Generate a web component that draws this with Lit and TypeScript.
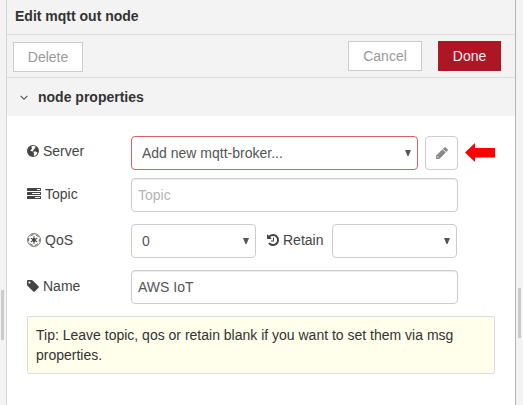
import { LitElement, html, css, svg, nothing } from "lit";
import { customElement, property } from "lit/decorators.js";

const GLYPHS: Record<string, { box: string; width: number; body: unknown }> = {
  globe: {
    box: "0 0 12 14",
    width: 12,
    body: svg`<path fill-rule="evenodd" d="M6 1a6 6 0 1 0 0 12A6 6 0 0 0 6 1ZM4.6 2.2 6.2 1.8 8.6 2.4 8 3.2 8.7 3.9 7.6 4.6 7 5.6 6 6.3 6.3 7 5.5 7.4 4.6 6.9 3.9 7.2 3.4 6.2 4.4 5.3 5.2 4.5 4.4 3.6ZM7 7.6 8.4 7.3 9.3 8.1 10.6 8.4 9.9 10.1 8.5 11.4 6.9 12 6.7 11 7.3 10.1 6.5 9.1Z"/>`,
  },
  tasks: {
    box: "0 0 1792 1792",
    width: 14,
    body: svg`<path d="M1024 1408h640v-128h-640v128zm-384-512h1024v-128h-1024v128zm640-512h384v-128h-384v128zm512 832v256q0 26-19 45t-45 19h-1664q-26 0-45-19t-19-45v-256q0-26 19-45t45-19h1664q26 0 45 19t19 45zm0-512v256q0 26-19 45t-45 19h-1664q-26 0-45-19t-19-45v-256q0-26 19-45t45-19h1664q26 0 45 19t19 45zm0-512v256q0 26-19 45t-45 19h-1664q-26 0-45-19t-19-45v-256q0-26 19-45t45-19h1664q26 0 45 19t19 45z"/>`,
  },
  empire: {
    box: "0 0 14 14",
    width: 14,
    body: svg`
      <circle cx="7" cy="7" r="6.5" fill="none" stroke="currentColor" stroke-width=".7"/>
      <circle cx="7" cy="7" r="5.4" fill="none" stroke="currentColor" stroke-width=".9" stroke-dasharray="3.4 2.255" stroke-dashoffset="1.7"/>
      <circle cx="7" cy="7" r="1.9"/>
      <path d="M6.4 3.3h1.2L7.3 7l-.6 0ZM6.4 10.7h1.2L7.3 7h-.6ZM3.5 5.7l.6-1L7.2 6.8 6.9 7.3ZM9.9 9.3l.6-1L7.2 6.7 6.9 7.3ZM3.5 8.3l.6 1L7.2 7.3 6.9 6.7ZM9.9 4.7l.6 1L7.2 7.3 6.9 6.8Z"/>`,
  },
  tag: {
    box: "128 0 1536 1792",
    width: 12,
    body: svg`<path d="M576 448q0-53-37.5-90.5t-90.5-37.5-90.5 37.5-37.5 90.5 37.5 90.5 90.5 37.5 90.5-37.5 37.5-90.5zm1067 576q0 53-37 90l-491 492q-39 37-91 37-53 0-90-37l-715-716q-38-37-64.5-101t-26.5-117v-416q0-52 38-90t90-38h416q53 0 117 26.5t102 64.5l715 714q37 39 37 91z"/>`,
  },
  history: {
    box: "128 0 1536 1792",
    width: 12,
    body: svg`<path d="M1664 896q0 156-61 298t-164 245-245 164-298 61q-172 0-327-72.5t-264-204.5q-7-10-6.5-22.5t8.5-20.5l137-138q10-9 25-9 16 2 23 12 73 95 179 147t225 52q104 0 198.5-40.5t163.5-109.5 109.5-163.5 40.5-198.5-40.5-198.5-109.5-163.5-163.5-109.5-198.5-40.5q-98 0-188 35.5t-160 101.5l137 138q31 30 14 69-17 40-59 40h-448q-26 0-45-19t-19-45v-448q0-42 40-59 39-17 69 14l130 129q107-101 244.5-156.5t284.5-55.5q156 0 298 61t245 164 164 245 61 298zm-640-288v448q0 14-9 23t-23 9h-320q-14 0-23-9t-9-23v-64q0-14 9-23t23-9h224v-352q0-14 9-23t23-9h64q14 0 23 9t9 23z"/>`,
  },
  pencil: {
    box: "128 0 1536 1792",
    width: 12,
    body: svg`<path d="M400 1500l80-80-120-120-80 80v60h60v60zM960 416l416 416-832 832h-416v-416zm683 96q0 53-37 90l-166 166-416-416 166-165q36-38 90-38 53 0 91 38l235 234q37 39 37 91z" fill-rule="evenodd"/>`,
  },
};

@customElement("form-icon")
export class FormIcon extends LitElement {
  @property() name = "";

  static styles = css`
    :host { display: block; flex: none; height: 14px; }
    svg { display: block; fill: currentColor; }
  `;

  render() {
    const g = GLYPHS[this.name];
    return g ? html`<svg width=${g.width} height="14" viewBox=${g.box}>${g.body}</svg>` : nothing;
  }
}

@customElement("select-box")
export class SelectBox extends LitElement {
  @property() value = "";

  static styles = css`
    :host {
      box-sizing: border-box;
      display: flex;
      align-items: center;
      justify-content: space-between;
      height: 34px;
      padding: 0 6px 0 10px;
      border: 1px solid #ccc;
      border-radius: 4px;
      background: #fff;
      color: #555;
    }
    :host([invalid]) { border-color: #d6615f; }
    svg { display: block; fill: #555; }
  `;

  render() {
    return html`<span>${this.value}</span>
      <svg width="6" height="6" viewBox="0 0 6 6"><path d="M0 0h6L3.5 6h-1z" /></svg>`;
  }
}

@customElement("app-root")
export class AppRoot extends LitElement {
  static styles = css`
    :host {
      display: grid;
      grid-template-columns: 6px 1fr 7px;
      height: 405px;
      overflow: hidden;
      background: #f3f3f3;
      color: #333;
      font: 14px/20px "Liberation Sans", Arial, sans-serif;
    }
    .gutter { display: flex; justify-content: flex-end; align-items: flex-start; }
    .left { padding: 290px 2px 0 0; }
    .right { padding: 288px 2px 0 0; }
    .grip { width: 3px; height: 50px; background: #ccc; }
    .tray {
      display: flex;
      flex-direction: column;
      min-width: 0;
      background: #fff;
      border-left: 1px solid #d6d6d6;
      border-right: 1px solid #b4b4b4;
    }
    .title, .toolbar, .section {
      box-sizing: border-box;
      display: flex;
      background: #f3f3f3;
      flex: none;
    }
    .title, .section { font-weight: bold; }
    .title { height: 35px; padding: 6px 8px; border-bottom: 1px solid #ddd; }
    .toolbar { height: 43px; padding: 6px 14px 0 6px; border-bottom: 1px solid #ddd; }
    .section { height: 38px; padding: 9px 12.500px; gap: 10.500px; }
    .section svg { margin-top: 8px; }
    button {
      box-sizing: border-box;
      height: 30px;
      padding: 0;
      border: 1px solid #ccc;
      background: #fff;
      color: #999;
      font: inherit;
    }
    .delete { width: 70px; margin: 1px auto 0 0; }
    .cancel { width: 74px; margin-right: 16px; }
    .done { width: 63px; background: #ad1625; border-color: #ad1625; color: #eee; }
    .form { display: flex; flex-direction: column; padding: 20px 20px 0; }
    .row { display: flex; height: 34px; }
    .server { margin-bottom: 8px; }
    .topic, .qos, .name { margin-bottom: 12px; }
    label { display: flex; width: 104px; height: 20px; margin-top: 6px; gap: 4px; color: #444; }
    .server label { margin-top: 5px; }
    label form-icon { margin-top: 3px; }
    .server .grow { width: 287px; }
    .short { width: 125px; }
    .row .retain { width: 65px; margin-left: 11px; }
    .edit {
      display: grid;
      place-items: center;
      width: 33px;
      height: 34px;
      margin-left: 7px;
      border-radius: 4px;
      color: #888;
    }
    .pointer { margin: 7px 0 0 7px; fill: #fe0000; }
    input {
      box-sizing: border-box;
      width: 327px;
      height: 34px;
      padding: 0 6px;
      border: 1px solid #ccc;
      border-radius: 4px;
      box-shadow: inset 0 1px 1px rgba(0, 0, 0, 0.075);
      color: #555;
      font: inherit;
    }
    input::placeholder { color: #b5b5b5; opacity: 1; }
    .tip {
      box-sizing: border-box;
      height: 58px;
      padding: 8px;
      border: 1px solid #ddd;
      border-radius: 2px;
      background: #ffffeb;
    }
  `;

  render() {
    return html`
      <div class="gutter left"><div class="grip"></div></div>
      <main class="tray">
        <div class="title">Edit mqtt out node</div>
        <div class="toolbar">
          <button class="delete">Delete</button>
          <button class="cancel">Cancel</button>
          <button class="done">Done</button>
        </div>
        <div class="section">
          <svg width="8" height="6" viewBox="0 0 8 6">
            <path d="M.6.8 4 4.2 7.4.8" fill="none" stroke="#555" stroke-width="1.1" />
          </svg>
          <span>node properties</span>
        </div>
        <div class="form">
          <div class="row server">
            <label><form-icon name="globe"></form-icon>Server</label>
            <select-box class="grow" invalid value="Add new mqtt-broker..."></select-box>
            <button class="edit" aria-label="Edit"><form-icon name="pencil"></form-icon></button>
            <svg class="pointer" width="30" height="20" viewBox="0 0 30 20">
              <path d="M0 9.500 10 0v5h20v9.500H10v4.500z" />
            </svg>
          </div>
          <div class="row topic">
            <label><form-icon name="tasks"></form-icon>Topic</label>
            <input placeholder="Topic" />
          </div>
          <div class="row qos">
            <label><form-icon name="empire"></form-icon>QoS</label>
            <select-box class="short" value="0"></select-box>
            <label class="retain"><form-icon name="history"></form-icon>Retain</label>
            <select-box class="short"></select-box>
          </div>
          <div class="row name">
            <label><form-icon name="tag"></form-icon>Name</label>
            <input value="AWS IoT" />
          </div>
          <div class="tip">
            Tip: Leave topic, qos or retain blank if you want to set them via msg properties.
          </div>
        </div>
      </main>
      <div class="gutter right"><div class="grip"></div></div>
    `;
  }
}
